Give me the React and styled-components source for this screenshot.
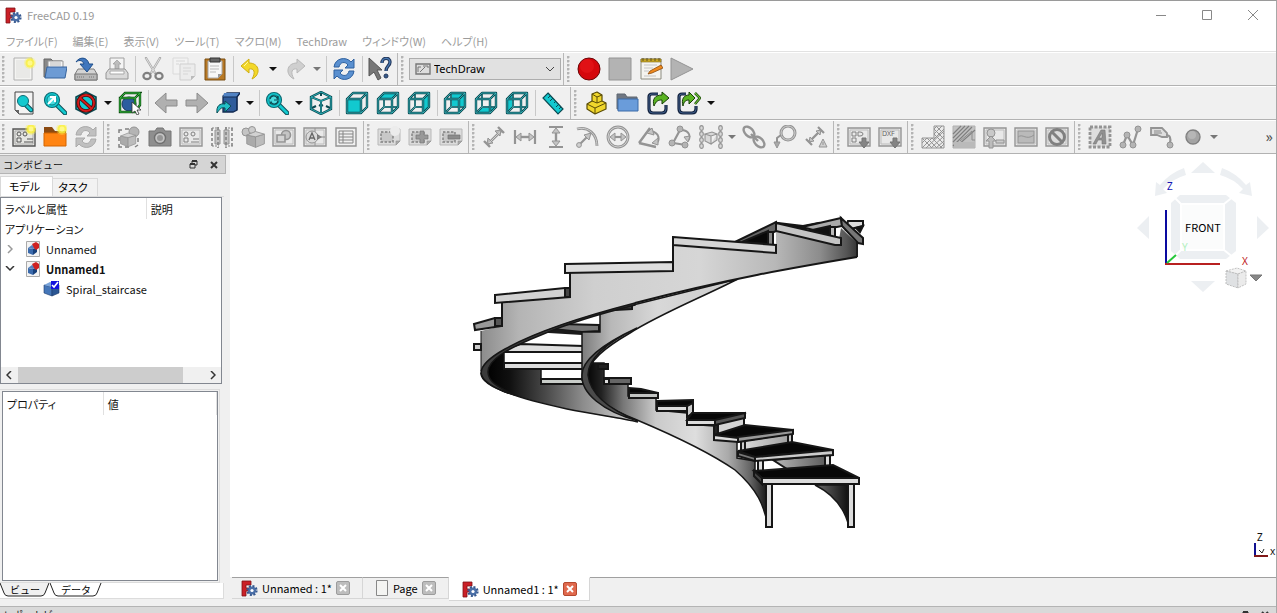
import React from "react";
import styled, { createGlobalStyle } from "styled-components";

const UI = `"Noto Sans CJK JP", "Noto Sans", sans-serif`;
const LATIN = `"Noto Sans", "Noto Sans CJK JP", sans-serif`;

const Global = createGlobalStyle`
  *, *::before, *::after { box-sizing: border-box; }
  body { margin: 0; background: #f0f0f0; overflow: hidden; }
  button, select { font: inherit; color: inherit; }
`;

/* ---------- window frame ---------- */

const Window = styled.div`
  display: flex;
  flex-direction: column;
  height: 100vh;
  border-top: 1px solid #9a9a9a;
  border-right: 1px solid #a8a8a8;
  font: 11px/16px ${UI};
  font-feature-settings: "palt";
  color: #111;
  background: #f0f0f0;
`;

const TitleBar = styled.header`
  display: flex;
  align-items: center;
  flex: none;
  height: 30px;
  padding: 0 0 2px 5px;
  background: #fff;
  color: #999;
`;

const Title = styled.h1`
  flex: 1;
  margin: 0 0 0 5px;
  font: 400 11px/16px ${UI};
`;

const CaptionButton = styled.button`
  display: grid;
  place-items: center;
  width: 46px;
  height: 28px;
  padding: 0;
  border: 0;
  background: none;
`;

const MenuBar = styled.nav`
  display: flex;
  gap: 15px;
  flex: none;
  height: 21px;
  padding: 1px 6px 0;
  background: #fff;
  border-bottom: 1px solid #e2e2e2;
`;

const MenuItem = styled.button`
  padding: 0;
  border: 0;
  background: none;
  color: #9c9c9c;
  line-height: 17px;
  white-space: nowrap;
`;

/* ---------- toolbars ---------- */

const ToolRow = styled.div`
  display: flex;
  flex: none;
  height: 34px;
  border-top: 1px solid #fff;
  border-bottom: 1px solid #b2b2b2;
  background: #f0f0f0;
`;

const Bar = styled.div`
  display: flex;
  align-items: center;
  flex: ${(p) => (p.$fill ? "1" : "none")};
  padding-right: 2px;
  border-right: 1px solid ${(p) => (p.$fill ? "transparent" : "#b8b8b8")};
`;

const Handle = styled.span`
  flex: none;
  width: ${(p) => (p.$first ? "8px" : "9px")};
  height: 26px;
  background: radial-gradient(circle at 1px 1px, #b4b4b4 1px, transparent 2px) 2px 0 / 3px 4px repeat-y;
  background-position-x: ${(p) => (p.$first ? "2px" : "3px")};
`;

const ToolButton = styled.button`
  display: grid;
  place-items: center;
  width: 31px;
  height: 30px;
  padding: 0;
  border: 0;
  background: none;
`;

const Drop = styled.button`
  display: grid;
  place-items: center;
  width: ${(p) => (p.$disabled ? "12px" : "13px")};
  height: 28px;
  padding: 0;
  border: 0;
  background: none;
`;

const Separator = styled.span`
  width: 5px;
  height: 26px;
  background: linear-gradient(#c8c8c8, #c8c8c8) 3px 0 / 1px 100% no-repeat;
`;

const More = styled.button`
  margin-left: auto;
  padding: 0;
  border: 0;
  background: none;
  font: 14px/16px ${LATIN};
  color: #555;
`;

const Workbench = styled.label`
  display: flex;
  align-items: center;
  width: 152px;
  height: 22px;
  margin: 0 0 0 2px;
  padding: 0 5px;
  border: 1px solid #adadad;
  background: #e1e1e1;
`;

const WorkbenchSelect = styled.select`
  flex: 1;
  min-width: 0;
  padding: 0 0 0 3px;
  border: 0;
  appearance: none;
  background: none;
  font: 11px/16px ${LATIN};
  color: #000;
`;

/* ---------- combo view dock ---------- */

const Workspace = styled.main`
  display: flex;
  flex: 1;
  min-height: 0;
`;

const Dock = styled.aside`
  display: flex;
  flex-direction: column;
  flex: none;
  width: 230px;
  padding: 1px 0 7px;
`;

const DockHeader = styled.div`
  display: flex;
  align-items: center;
  gap: 7px;
  flex: none;
  height: 19px;
  width: 226px;
  padding: 0 4px 0 3px;
  border: 1px solid #b4b4b4;
  border-left: 0;
  background: #d5d5d5;
`;

const DockTitle = styled.h2`
  flex: 1;
  margin: 0;
  font: 400 10px/16px ${UI};
`;

const IconButton = styled.button`
  display: grid;
  place-items: center;
  width: 14px;
  height: 14px;
  padding: 0;
  border: 0;
  background: none;
`;

const TabStrip = styled.div`
  display: flex;
  align-items: flex-end;
  flex: none;
  height: 23px;
  width: 224px;
  border-bottom: 1px solid #dcdcdc;
`;

const DockTab = styled.button`
  width: ${(p) => (p.$active ? "53px" : "45px")};
  height: ${(p) => (p.$active ? "20px" : "18px")};
  padding: 0 4px 2px 0;
  border: 1px solid #d9d9d9;
  border-width: 1px 1px 0 ${(p) => (p.$active ? "1px" : "0")};
  background: ${(p) => (p.$active ? "#fff" : "#f2f2f2")};
  color: #000;
`;

const TreeFrame = styled.section`
  display: flex;
  flex-direction: column;
  flex: 187 1 0;
  min-height: 0;
  width: 222px;
  border: 1px solid #828790;
  background: #fff;
`;

const TreeTable = styled.table`
  width: 100%;
  border-collapse: collapse;
  table-layout: fixed;
  th, td { height: 20px; padding: 0 4px; line-height: 16px; text-align: left; font-weight: 400; white-space: nowrap; }
  thead th + th { border-left: 1px solid #e0e0e0; }
  thead th { height: 21px; }
`;

const TreeCell = styled.div`
  display: flex;
  align-items: center;
  gap: 6px;
  height: 18px;
  padding-left: ${(p) => (p.$child ? "38px" : "0")};
  font: ${(p) => (p.$bold ? "700" : "400")} 11px/16px ${UI};
`;

const Expander = styled.button`
  display: grid;
  place-items: center;
  width: 12px;
  height: 14px;
  margin-right: 4px;
  margin-left: -1px;
  padding: 0;
  border: 0;
  background: none;
`;

const ScrollBar = styled.div`
  display: flex;
  justify-content: space-between;
  align-items: center;
  height: 16px;
  margin-top: auto;
  padding: 0 1px;
  background: #f0f0f0;
`;

const ScrollTrack = styled.div`
  flex: 1;
  height: 16px;
  padding-left: 2px;
`;

const ScrollThumb = styled.div`
  width: 88%;
  height: 16px;
  background: #cdcdcd;
`;

const PropertyPane = styled.section`
  display: flex;
  flex-direction: column;
  flex: 192 1 0;
  min-height: 0;
  width: 220px;
  margin-top: 5px;
  padding: 1px;
  border: 1px solid #dcdcdc;
  border-left-width: 0;
`;

const PropertyFrame = styled.div`
  flex: 1;
  margin-left: 1px;
  border: 1px solid #828790;
  background: #fff;
`;

const PropertyTable = styled.table`
  width: 100%;
  border-collapse: collapse;
  table-layout: fixed;
  th { height: 23px; padding: 0 4px; border-right: 1px solid #e0e0e0; text-align: left; font-weight: 400; }
`;

const BottomTabs = styled.div`
  display: flex;
  flex: none;
  height: 16px;
  width: 224px;
  border: 1px solid #dcdcdc;
  border-width: 0 1px 1px 0;
  background: #fff;
`;

const SlantTab = styled.button`
  display: block;
  position: relative;
  width: ${(p) => (p.$active ? "52px" : "50px")};
  height: 14px;
  padding: 0;
  border: 0;
  background: none;
  font: 10px/12px ${UI};
  color: #000;
  svg { position: absolute; inset: 0; z-index: 0; }
  span { position: relative; }
`;

/* ---------- document area ---------- */

const Documents = styled.section`
  display: flex;
  flex-direction: column;
  flex: 1;
  min-width: 0;
`;

const Viewport = styled.div`
  position: relative;
  flex: 1;
  min-height: 0;
  padding: 61px 0 0 240px;
  overflow: hidden;
  background: #fff;
  svg { display: block; }
`;

const NaviCube = styled.svg`
  position: absolute;
  top: 0;
  right: 0;
`;

const AxisCross = styled.svg`
  position: absolute;
  right: 0;
  bottom: 18px;
`;

const DocTabs = styled.div`
  display: flex;
  align-items: flex-start;
  flex: none;
  height: 29px;
  padding-left: 2px;
`;

const DocTab = styled.div`
  display: flex;
  align-items: center;
  gap: 4px;
  height: ${(p) => (p.$active ? "24px" : "22px")};
  padding: 0 12px 0 ${(p) => (p.$wide ? "13px" : "9px")};
  border: 1px solid #d6d6d6;
  border-left-width: 0;
  border-top-color: ${(p) => (p.$active ? "#fff" : "#a0a0a0")};
  background: ${(p) => (p.$active ? "#fff" : "#f0f0f0")};
`;

const DocTabLabel = styled.button`
  display: flex;
  align-items: center;
  gap: 4px;
  height: 18px;
  padding: 0;
  border: 0;
  background: none;
  font: 11px/16px ${UI};
  color: #000;
`;

const CloseTab = styled.button`
  display: grid;
  place-items: center;
  width: 14px;
  height: 14px;
  padding: 0;
  border: 1px solid ${(p) => (p.$active ? "#b5492f" : "#9c9c9c")};
  border-radius: 2px;
  background: ${(p) => (p.$active ? "#e0694d" : "#bdbdbd")};
`;

const TabFiller = styled.div`
  flex: 1;
  border-top: 1px solid #a0a0a0;
`;

const ReportHeader = styled.footer`
  display: flex;
  justify-content: space-between;
  flex: none;
  height: 7px;
  padding: 0 7px 0 3px;
  overflow: hidden;
  border-top: 1px solid #b4b4b4;
  background: #d9d9d9;
  font: 10px/16px ${UI};
`;

const ReportButtons = styled.div`
  display: flex;
  gap: 12px;
  padding-top: 4px;
`;

/* ---------- icon drawings ---------- */

const G = "#949494";
const L = "#d0d0d0";
const T = "#12c9cf";
const D = "#0b4a52";

const Svg = ({ size = 24, children }) => (
  <svg width={size} height={size} viewBox="0 0 24 24" fill="none" aria-hidden="true">{children}</svg>
);

const Glow = ({ x = 18, y = 6 }) => (
  <g>
    <circle cx={x} cy={y} r="6" fill="#fff64a" opacity=".35" />
    <circle cx={x} cy={y} r="4.5" fill="#fbf03a" opacity=".8" />
    <circle cx={x} cy={y} r="2.5" fill="#fff98a" />
  </g>
);

const CubeWire = ({ face }) => {
  const faces = {
    front: "M2 8h14v14H2z",
    top: "M2 8l6-6h14l-6 6z",
    right: "M16 8l6-6v14l-6 6z",
    rear: "M8 2h14v14H8z",
    bottom: "M2 22l6-6h14l-6 6z",
    left: "M2 8l6-6v14l-6 6z",
  };
  const hidden = "M8 2v14M8 16h14M8 16l-6 6";
  const outline = "M2 8h14v14H2zM2 8l6-6h14l-6 6M22 2v14l-6 6";
  const behind = ["rear", "bottom", "left"].includes(face);
  return (
    <>
      {behind && <path d={faces[face]} fill={T} />}
      {face !== "front" && <path d={hidden} stroke={D} strokeWidth="2" />}
      {face !== "front" && <path d={hidden} stroke="#6ccfd3" strokeWidth=".7" />}
      {!behind && <path d={faces[face]} fill={T} />}
      <path d={outline} stroke={D} strokeWidth="2.4" strokeLinejoin="round" />
      <path d={outline} stroke="#3fc0c5" strokeWidth=".8" strokeLinejoin="round" />
    </>
  );
};

const Lens = ({ children }) => (
  <>
    <path d="M14 14l8 8" stroke={D} strokeWidth="4.600" strokeLinecap="round" />
    <path d="M14 14l8 8" stroke={T} strokeWidth="2.800" strokeLinecap="round" />
    <circle cx="9" cy="9" r="7.500" fill={T} stroke="#0b6b74" strokeWidth="1.200" />
    <circle cx="9" cy="9" r="5" fill="#4adce0" stroke="#0b8088" />
    {children}
  </>
);

const Frame = ({ children }) => (
  <>
    <path d="M1 3h22v18H1z" fill="#e8e8e8" stroke={G} strokeWidth="1.400" />
    <path d="M3 5h18v14H3z" stroke="#bdbdbd" />
    {children}
  </>
);

const SheetFrame = ({ children }) => (
  <>
    <path d="M1 4h22v12l-4 4H1z" fill="#dcdcdc" stroke="#b8b8b8" />
    <path d="M23 16h-4v4z" fill="#aaa" stroke={G} strokeWidth=".6" />
    <path d="M4 7h12v10H4z" fill="#c8c8c8" stroke="#808080" strokeWidth="1.400" strokeDasharray="2.4 1.6" />
    {children}
  </>
);

const Dots = ({ pts }) => pts.map(([x, y]) => <circle key={`${x}-${y}`} cx={x} cy={y} r="3" fill="#b4b4b4" stroke={G} />);

const GrayCube = ({ x = 0, y = 0, s = 1 }) => (
  <g transform={`translate(${x} ${y}) scale(${s})`} stroke={G} strokeLinejoin="round">
    <path d="M2 8l10 2v12l-10-4z" fill="#aaa" />
    <path d="M12 10l10-3v11l-10 4z" fill="#bcbcbc" />
    <path d="M2 8l10-4 10 3-10 3z" fill="#d2d2d2" />
  </g>
);

const icons = {
  newDoc: (<><path d="M2 1h18v22H2z" fill="#f4f4f2" stroke="#b0b0b0" /><path d="M4 3h14v18H4z" fill="#e9e9e7" /><Glow /></>),
  open: (<><path d="M1 2h7l2 2h9v16H1z" fill="#888" stroke="#666" /><path d="M5 4h15v8H5z" fill="#f5f5f5" stroke="#999" /><path d="M7 6h11M7 8h11" stroke="#bbb" /><path d="M4 10h20l-2 11H2z" fill="#6d9bd4" stroke="#36639c" /></>),
  save: (<><path d="M4 12h16l3 5v6H1v-6z" fill="#d4d4d4" stroke="#7c7c7c" /><path d="M1 17h22v6H1z" fill="#b8b8b8" stroke="#777" /><path d="M3 20h8M15 20h6" stroke="#777" strokeDasharray="1 1" /><path d="M2 5C5 0 13-1 15 7h4l-6 8-7-8h4C9 4 6 2 2 5z" fill="#3f76bd" stroke="#20508c" /></>),
  print: (<><path d="M5 1h14v12H5z" fill="#f4f4f4" stroke="#a0a0a0" /><path d="M12 3l4 4h-2v5h-4V7H8z" fill="#bdbdbd" stroke="#999" strokeWidth=".7" /><path d="M4 12h16l3 4v6H1v-6z" fill="#dadada" stroke={G} /><path d="M5 14h14v3H5z" fill="#fff" stroke="#a8a8a8" /></>),
  cut: (<><path d="M5 1l9 15M19 1l-9 15" stroke="#aaa" strokeWidth="2.400" strokeLinecap="round" /><path d="M5 1l9 15M19 1l-9 15" stroke="#ddd" strokeWidth="1" /><ellipse cx="6" cy="19" rx="3.600" ry="3.200" stroke="#808080" strokeWidth="2.200" /><ellipse cx="18" cy="19" rx="3.600" ry="3.200" stroke="#808080" strokeWidth="2.200" /></>),
  copy: (<><path d="M1 1h15v16H1z" fill="#f2f2f2" stroke="#dadada" /><path d="M8 7h15v12l-4 4H8z" fill="#ececec" stroke="#cfcfcf" /><path d="M11 11h8M11 14h8M11 17h5M4 4h9M4 7h3" stroke="#d6d6d6" /><path d="M23 19h-4v4z" fill="#bbb" /></>),
  paste: (<><path d="M2 2h20v21H2z" fill="#b87925" stroke="#7b4e12" /><path d="M5 4h14v13l-4 4H5z" fill="#f7f7f7" stroke="#aaa" /><path d="M7 9h9M7 12h9M7 15h6" stroke="#bbb" /><path d="M19 17h-4v4z" fill="#999" /><path d="M7 1h10v4H7z" fill="#666" stroke="#333" /></>),
  undo: (<><path d="M10 2L2 9l8 7v-4c5-1 7 3 3 10 9-4 8-16-3-16z" fill="#f3d829" stroke="#cfae14" strokeLinejoin="round" /><path d="M9 5L5 9" stroke="#fff8a0" /></>),
  redo: (<path d="M14 2l8 7-8 7v-4c-5-1-7 3-3 10-9-4-8-16 3-16z" fill="#cfcfcf" stroke="#b8b8b8" strokeLinejoin="round" />),
  refresh: (<><path d="M2 10C3 1 14-1 19 5l3-3v9h-9l3-3C13 4 8 5 7 10z" fill="#5a90d0" stroke="#2f619f" /><path d="M22 14c-1 9-12 11-17 5l-3 3v-9h9l-3 3c3 4 8 3 9-2z" fill="#5a90d0" stroke="#2f619f" /></>),
  whats: (<><path d="M1 1l13 12H9l4 8-3 2-4-8-5 4z" fill="#777" stroke="#555" /><path d="M14 6c0-6 8-6 8-1 0 4-4 4-4 9" stroke="#24385c" strokeWidth="3.400" /><path d="M14 6c0-6 8-6 8-1 0 4-4 4-4 9" stroke="#4a7cb5" strokeWidth="1.200" /><circle cx="18" cy="19" r="2" fill="#35598a" stroke="#24385c" /></>),
  record: (<><circle cx="12" cy="12" r="11" fill="#d5070c" stroke="#6b0507" /><circle cx="10" cy="9" r="7" fill="#ec1b1e" opacity=".5" /></>),
  stop: (<path d="M1 1h22v22H1z" fill="#b3b3b3" stroke="#949494" />),
  edit: (<><path d="M2 2h20v20H2z" fill="#f5f4ef" stroke="#8c8c80" /><path d="M2 2h20v3H2z" fill="#c9a824" stroke="#806a18" strokeWidth=".6" /><path d="M4 1v3M8 1v3M12 1v3M16 1v3M20 1v3" stroke="#5e5020" /><path d="M5 8h13M5 11h9M5 14h5M5 19h12" stroke="#c4c4c4" /><path d="M22 8l2 3-11 5-4 1 2-3z" fill="#f08a1d" stroke="#8c4a0b" strokeWidth=".8" /></>),
  play: (<path d="M1 1l22 11L1 23z" fill="#b3b3b3" stroke="#949494" />),

  fitAll: (<><path d="M3 1h18v22H7l-4-4z" fill="#f3f3f3" stroke="#444" /><path d="M3 19h4v4z" fill="#666" /><path d="M14 14l5 5" stroke={D} strokeWidth="4.600" strokeLinecap="round" /><path d="M14 14l5 5" stroke={T} strokeWidth="2.800" strokeLinecap="round" /><circle cx="11" cy="10" r="5.500" fill={T} stroke="#0b6b74" /></>),
  fitSel: (<Lens><path d="M5 13l6-6M7 6h5v5" stroke="#fff" strokeWidth="2" /></Lens>),
  drawStyle: (<><path d="M12 1l10 5v12l-10 5-10-5V6z" fill={T} stroke={D} strokeWidth="1.600" /><circle cx="12" cy="12" r="8" stroke="#4a0a0a" strokeWidth="3.600" /><path d="M6 7l12 11" stroke="#4a0a0a" strokeWidth="3.600" /><circle cx="12" cy="12" r="8" stroke="#d41b1b" strokeWidth="1.800" /><path d="M6 7l12 11" stroke="#d41b1b" strokeWidth="1.800" /></>),
  boxSel: (<><circle cx="11" cy="13" r="7" fill="#2c5d9f" stroke="#173461" /><path d="M2 7h15v14H2zM2 7l5-5h15l-5 5M22 2v12l-5 7" stroke="#0d4d12" strokeWidth="2.400" /><path d="M2 7h15v14H2zM2 7l5-5h15l-5 5M22 2v12l-5 7" stroke="#37b83f" /><path d="M14 11l9 8h-4l2 4-2 1-2-4-3 2z" fill="#fff" stroke="#333" strokeWidth=".8" /></>),
  back: (<path d="M1 12L12 2v7h11v6H12v7z" fill="#b0b0b0" stroke="#8c8c8c" />),
  forward: (<path d="M23 12L12 2v7H1v6h11v7z" fill="#b0b0b0" stroke="#8c8c8c" />),
  link: (<><path d="M7 5l4-3h13l-3 4v13l-4 2H7z" fill="#2f5c9b" stroke="#122a52" strokeWidth="1.300" /><path d="M8 2h15l-3 4H7z" fill="#5183c4" /><path d="M7 6h14l3-4M21 6v13" stroke="#122a52" /><path d="M1 22c-1-7 3-10 8-9V10l6 5-6 6v-4c-4-1-5 1-8 5z" fill="#21bfc6" stroke={D} /></>),
  zoomSync: (<Lens><path d="M5 8c1-4 6-4 7-1l1-2v4H9M13 10c-1 4-6 4-7 1l-1 2" stroke={D} strokeWidth="1.200" /></Lens>),
  iso: (<><path d="M12 1l10 5v12l-10 5-10-5V6z" stroke={D} strokeWidth="2.400" /><path d="M2 6l10 4 10-4M12 10v13M12 2v3M3 17l4-2M21 17l-4-2M12 15l-2-1M12 15l2-1" stroke={D} strokeWidth="2" /><path d="M12 1l10 5v12l-10 5-10-5V6zM2 6l10 4 10-4M12 10v13" stroke="#2fb9bf" strokeWidth=".9" /></>),
  front: <CubeWire face="front" />, top: <CubeWire face="top" />, right: <CubeWire face="right" />,
  rear: <CubeWire face="rear" />, bottom: <CubeWire face="bottom" />, left: <CubeWire face="left" />,
  ruler: (<><path d="M7 2l15 16-5 5L2 7z" fill={T} stroke={D} strokeWidth="1.200" /><path d="M9 5L7 7M12 7l-3 3M15 10l-2 2M18 13l-3 3M20 16l-2 2" stroke={D} /></>),
  part: (<><path d="M8 3l5-2 5 3v6l4 2v6l-11 5-8-5v-5l5-3z" fill="#f0d62c" stroke="#5a4c06" strokeWidth="1.200" strokeLinejoin="round" /><path d="M3 13l8 4 11-5M11 17v6M8 3l5 3 5-2M13 6v6l5-2M8 10l5 2" stroke="#5a4c06" /></>),
  group: (<><path d="M2 3h8l2 3h10v12H2z" fill="#6e7682" stroke="#5f6670" /><path d="M3 8h20v12H3z" fill="#6a9cda" stroke="#3b6ba8" /></>),
  export1: (<><path d="M12 3H6Q3 3 3 6v12q0 4 4 4h9q4 0 4-4v-4" stroke="#14233f" strokeWidth="3.200" /><path d="M12 3H6Q3 3 3 6v12q0 4 4 4h9q4 0 4-4v-4" stroke="#41618f" strokeWidth=".9" /><path d="M8 15c-2-7 1-11 8-11V1l7 6-7 6V9c-4 0-6 1-8 6z" fill="#59b321" stroke="#173f07" /></>),
  export2: (<><path d="M9 3H5Q2 3 2 6v12q0 4 4 4h9q4 0 4-4v-3" stroke="#14233f" strokeWidth="3.200" /><path d="M9 3H5Q2 3 2 6v12q0 4 4 4h9q4 0 4-4v-3" stroke="#41618f" strokeWidth=".9" /><path d="M6 15c-2-7 1-11 6-11V1l6 6-6 6V9c-3 0-5 1-6 6z" fill="#59b321" stroke="#173f07" /><path d="M18 2l5 5-5 6" stroke="#173f07" strokeWidth="2.600" /><path d="M18 2l5 5-5 6" stroke="#72c93d" strokeWidth="1.100" /></>),

  page: (<><path d="M1 4h22v17H1z" fill="#e6e6e2" stroke="#555" strokeWidth="1.400" /><path d="M3 6h18v13H3z" stroke="#aaa" /><circle cx="7" cy="9" r="2" stroke="#555" /><circle cx="13" cy="9" r="2" stroke="#555" /><path d="M5 13h4v4H5zM12 17h9M15 14h6" stroke="#555" /><Glow x={19} y={4} /></>),
  pageTpl: (<><path d="M1 2h8l3 4h11v15H1z" fill="#8b4a12" /><path d="M1 8h22v13H1z" fill="#ff8412" stroke="#d36500" /><Glow x={19} y={4} /></>),
  redraw: (<><path d="M2 10C3 1 14-1 19 5l3-3v9h-9l3-3C13 4 8 5 7 10z" fill="#c0c0c0" stroke="#aaa" /><path d="M22 14c-1 9-12 11-17 5l-3 3v-9h9l-3 3c3 4 8 3 9-2z" fill="#c0c0c0" stroke="#aaa" /></>),
  view: (<><circle cx="17" cy="7" r="5" fill="#b4b4b4" stroke={G} /><path d="M2 8V5h3M8 4h4M2 12v4M2 19v3h3M8 22h4M21 13v4M21 20l-3 2" stroke="#808080" strokeWidth="1.500" /><GrayCube x={2} y={5} s={0.76} /></>),
  camera: (<><path d="M1 6h6l2-3h6l2 3h6v15H1z" fill="#8f8f8f" stroke="#767676" strokeLinejoin="round" /><circle cx="12" cy="13" r="5.500" fill="#c4c4c4" stroke="#707070" strokeWidth="1.400" /><circle cx="12" cy="13" r="3" fill="#969696" /></>),
  sheet: (<Frame><circle cx="7" cy="9" r="2" stroke="#808080" /><circle cx="14" cy="9" r="2" stroke="#808080" /><path d="M5 13h4v4H5zM12 17h8M14 14h6" stroke="#808080" /></Frame>),
  projGroup: (<><path d="M5 5h5v14H5zM14 5h5v14h-5z" fill="#c4c4c4" stroke={G} /><path d="M2 3v19M22 3v19M8 2v21M16 2v21" stroke="#858585" strokeWidth="1.600" strokeDasharray="3 2" /><path d="M2 3h7M15 3h8M2 21h7M15 21h8" stroke="#858585" strokeDasharray="2 1" /></>),
  views: (<><circle cx="5" cy="7" r="4" fill="#c4c4c4" stroke={G} /><circle cx="11" cy="5" r="3.500" fill="#ccc" stroke={G} /><GrayCube x={4} y={3} s={0.88} /></>),
  section: (<Frame><circle cx="14" cy="10" r="4.500" fill="#c4c4c4" stroke={G} strokeWidth="1.600" /><path d="M5 10h8v7H5z" fill="#d4d4d4" stroke={G} strokeWidth="1.600" /></Frame>),
  detail: (<Frame><path d="M12 3v18" stroke={G} /><circle cx="9" cy="12" r="6" fill="#dadada" stroke={G} /><path d="M6 15l3-7 3 7M7 13h4" stroke="#666" strokeWidth="1.300" /><path d="M14 9l5 3-5 3z" fill="#777" /><path d="M14 12h8" stroke="#888" /></Frame>),
  spreadsheet: (<><path d="M2 3h20v18H2z" fill="#f0f0f0" stroke={G} strokeWidth="1.400" /><path d="M5 6h14v12H5zM5 9h14M5 12h14M5 15h14M9 6v12" stroke="#858585" /></>),
  clip: <SheetFrame><circle cx="18" cy="6" r="5" fill="#ececec" /></SheetFrame>,
  clipAdd: <SheetFrame><path d="M12 6h4v4h4v4h-4v4h-4v-4H8v-4h4z" fill="#999" stroke="#777" strokeWidth=".7" /></SheetFrame>,
  clipSub: <SheetFrame><path d="M9 10h12v4H9z" fill="#8c8c8c" stroke="#707070" strokeWidth=".7" /></SheetFrame>,
  length: (<g stroke={G}><path d="M2 16l6 6M16 2l6 6" strokeWidth="2.400" /><path d="M6 19L19 6" strokeWidth="2.600" /><path d="M5 19l1-6 5 5zM19 5l-1 6-5-5z" fill="#bbb" /><path d="M7 18L18 7" stroke={L} /></g>),
  horiz: (<g stroke={G}><path d="M2 5v14M22 5v14" strokeWidth="2.200" /><path d="M5 12h14" strokeWidth="2.400" /><path d="M3 12l5-4v8zM21 12l-5-4v8z" fill="#c4c4c4" /></g>),
  vert: (<g stroke={G}><path d="M5 2h14M5 22h14" strokeWidth="2.200" /><path d="M12 5v14" strokeWidth="2.400" /><path d="M12 3L8 8h8zM12 21l-4-5h8z" fill="#c4c4c4" /></g>),
  radius: (<g stroke={G}><path d="M2 4c11-3 20 5 20 17" strokeWidth="2.800" /><path d="M2 4c11-3 20 5 20 17" stroke={L} /><path d="M4 20l8-8" strokeWidth="2.200" /><path d="M16 8l-2 7-5-5z" fill="#c4c4c4" /><circle cx="4" cy="20" r="2.400" fill="#d0d0d0" /></g>),
  diameter: (<g stroke={G}><circle cx="12" cy="12" r="10" strokeWidth="2.800" /><circle cx="12" cy="12" r="10" stroke="#d0d0d0" strokeWidth="1" /><path d="M6 12h12" strokeWidth="2.200" /><path d="M4 12l5-4v8zM20 12l-5-4v8z" fill="#c4c4c4" /></g>),
  angle: (<g stroke={G} strokeWidth="2"><path d="M2 18L13 3M2 18l17 4" strokeWidth="2.400" /><path d="M14 6c9 2 9 9 5 13" /><path d="M21 13l-6 5 6 2zM15 3l-5 5 7 2z" fill="#c4c4c4" strokeWidth="1" /></g>),
  angle3: (<g stroke={G}><path d="M5 18l7-13M5 18l13 2" strokeWidth="2.200" /><path d="M14 5c8 1 9 7 6 11" strokeWidth="1.800" /><Dots pts={[[4, 18], [12, 4], [17, 20]]} /><path d="M16 12l6-1-2 6z" fill="#c4c4c4" /></g>),
  link3d: (<g stroke={G} strokeWidth="1.100" fill="#d8d8d8">{[3, 9, 15, 21].map((y) => <g key={y}><ellipse cx="2.500" cy={y} rx="1.800" ry="2.400" /><ellipse cx="21.500" cy={y} rx="1.800" ry="2.400" /></g>)}<path d="M6 9l7-2 5 2-6 2zM6 9v7l6 3v-8M12 19l6-4V9" /></g>),
  chain: (<g stroke={G}><ellipse cx="7" cy="7" rx="6.500" ry="4" transform="rotate(45 7 7)" strokeWidth="2.400" /><ellipse cx="17" cy="17" rx="6.500" ry="4" transform="rotate(45 17 17)" strokeWidth="2.400" /><path d="M9 9l7 7" strokeWidth="2.400" /></g>),
  balloon: (<g stroke={G}><circle cx="15" cy="8" r="7" strokeWidth="3" /><circle cx="15" cy="8" r="7" stroke="#d0d0d0" strokeWidth="1" /><path d="M8 10L4 13v7" strokeWidth="2" /><path d="M1 17h6l-3 6z" fill="#aaa" /></g>),
  extent: (<g stroke={G}><path d="M2 14l6 6M14 2l6 6" strokeWidth="2.200" /><path d="M5 17L17 5" strokeWidth="2.400" /><path d="M5 17l1-5 4 4zM17 5l-1 5-4-4z" fill="#c4c4c4" /><path d="M19 14l4 8h-8z" fill="#d0d0d0" /><path d="M19 17v3" /></g>),
  svgOut: (<Frame><path d="M5 7h4v4H5zM5 13h4v4H5z" stroke="#808080" /><path d="M11 7h2q3 0 3 2t-3 2h-2z" stroke="#808080" /><path d="M15 13h4v4h3l-5 6-5-6h3z" fill="#858585" stroke="#747474" /></Frame>),
  dxfOut: (<Frame><text x="4" y="11" fontSize="7" fontFamily="Noto Sans" fill="#666">DXF</text><path d="M15 13h4v4h3l-5 6-5-6h3z" fill="#858585" stroke="#747474" /></Frame>),
  hatch: (<><path d="M13 1h10v22H1V13h12z" fill="#eaeaea" stroke={G} /><path d="M13 4l3-3M13 9l8-8M13 14L23 4M1 18l5-5M1 23l10-10M5 23L23 6M10 23l13-12M15 23l8-7M19 23l4-4M1 13l10 10M6 13l10 10M11 13l10 10M13 9l10 10M13 4l10 10M15 1l8 8" stroke={G} /></>),
  geomHatch: (<><path d="M1 1h22v22H1z" fill="#c2c2c2" stroke="#b0b0b0" /><path d="M1 9l8-8M1 13L13 1M1 17L17 1M1 21L20 2M5 21L23 5" stroke="#808080" strokeWidth="1.200" /><path d="M8 16L20 6v9h3M2 19h21" stroke="#8c8c8c" /><path d="M2 17h21v5H2z" fill="#bababa" /></>),
  symbol: (<Frame><path d="M13 15h8v3h-8z" fill="#ccc" stroke={G} /><circle cx="8" cy="8" r="4" fill="#c8c8c8" stroke={G} /><path d="M8 11l5 5h-3v7H6v-7H3z" fill="#bcbcbc" stroke={G} /></Frame>),
  image: (<Frame><path d="M4 6h16v12H4z" fill="#bababa" stroke={G} /><path d="M4 12c5-4 8 4 16-2" stroke="#949494" /></Frame>),
  toggle: (<Frame><circle cx="12" cy="12" r="7.500" fill="#dcdcdc" stroke="#808080" strokeWidth="3" /><path d="M7 7l10 10" stroke="#808080" strokeWidth="3" /></Frame>),
  anno: (<><path d="M2 2h20v20H2z" fill="#dedede" stroke={G} strokeWidth="2.800" strokeDasharray="3 1.500" /><path d="M5 19l8-14h4l1 14h-4v-4h-4l-2 4zM11 13h3V8z" fill="#909090" stroke="#777" strokeWidth=".6" /></>),
  leader: (<><path d="M4 20l4-10 6 10 5-16" stroke={G} strokeWidth="2.200" /><Dots pts={[[4, 20], [8, 10], [14, 20], [19, 4]]} /></>),
  rich: (<><path d="M1 3h11l5 5v4h-5L7 10H1z" fill="#dedede" stroke={G} strokeWidth="1.800" /><path d="M4 6h7M4 8h8" stroke="#888" /><path d="M16 10c4 0 5 3 4 8" stroke={G} strokeWidth="2.200" /><Dots pts={[[20, 20]]} /></>),
  cosmetic: (<><circle cx="12" cy="12" r="7" fill="#a4a4a4" stroke="#808080" strokeWidth="1.400" /><circle cx="11" cy="10" r="4" fill="#b6b6b6" /></>),
};

const Triangle = ({ disabled }) => (
  <svg width="8" height="4" aria-hidden="true"><path d="M0 0h8L4 4z" fill={disabled ? "#777" : "#111"} /></svg>
);

const rows = [
  [
    ["newDoc", "open", "save", "print", "|", "cut", "copy", "paste", "|", "undo", "v", "redo", "v", "|", "refresh", "|", "whats"],
    ["select"],
    ["record", "stop", "edit", "play"],
  ],
  [
    ["fitAll", "fitSel", "drawStyle", "v", "boxSel", "|", "back", "forward", "link", "v", "|", "zoomSync", "v", "iso", "|", "front", "top", "right", "|", "rear", "bottom", "left", "|", "ruler"],
    ["part", "group", "export1", "export2", "v"],
  ],
  [
    ["page", "pageTpl", "redraw"],
    ["view", "camera", "sheet", "projGroup", "views", "section", "detail", "spreadsheet"],
    ["clip", "clipAdd", "clipSub"],
    ["length", "horiz", "vert", "radius", "diameter", "angle", "angle3", "link3d", "d", "chain", "balloon", "extent"],
    ["svgOut", "dxfOut"],
    ["hatch", "geomHatch", "symbol", "image", "toggle"],
    ["anno", "leader", "rich", "cosmetic", "d", "more"],
  ],
];

function Tool({ name, after }) {
  if (name === "|") return <Separator />;
  if (name === "v" || name === "d")
    return <Drop $disabled={name === "d"} aria-label="more options"><Triangle disabled={name === "d" || after === "redo"} /></Drop>;
  if (name === "more") return <More aria-label="more tools">»</More>;
  if (name === "select")
    return (
      <Workbench>
        <svg width="16" height="12" viewBox="0 0 16 12" aria-hidden="true">
          <path d="M1 1h14v10H1z" fill="#ddd" stroke="#777" strokeWidth="1.400" />
          <path d="M3 9V4h3M5 9l5-5M8 3h5v2" stroke="#777" fill="none" />
        </svg>
        <WorkbenchSelect aria-label="workbench" defaultValue="TechDraw">
          <option>TechDraw</option>
        </WorkbenchSelect>
        <svg width="9" height="5" aria-hidden="true"><path d="M0 0l4 4 4-4" stroke="#444" fill="none" /></svg>
      </Workbench>
    );
  return <ToolButton aria-label={name}><Svg>{icons[name]}</Svg></ToolButton>;
}

const AppLogo = () => (
  <svg width="17" height="17" viewBox="0 0 17 17" aria-hidden="true">
    <path d="M1 1h9v4H5v3h4v3H5v5H1z" fill="#cb2027" stroke="#7d1216" strokeWidth=".8" />
    <circle cx="11" cy="10.500" r="4" fill="#4a6fa8" />
    <circle cx="11" cy="10.500" r="4.600" fill="none" stroke="#36588f" strokeWidth="2" strokeDasharray="2 1.600" />
    <circle cx="11" cy="10.500" r="1.600" fill="#fff" />
  </svg>
);

const DocIcon = () => (
  <svg width="14" height="16" viewBox="0 0 14 16" aria-hidden="true">
    <path d="M.5.5h13v15H.5z" fill="#f3f3f3" stroke="#aaa" />
    <path d="M2 7l5 1v6l-5-2z" fill="#3a6aac" /><path d="M7 8l4-2v5l-4 3z" fill="#18417c" /><path d="M2 7l4-3 5 2-4 2z" fill="#5583bf" />
    <path d="M6 3l4-2 3 2v4l-3 2-2-2z" fill="#cf2222" />
  </svg>
);

const PartIcon = () => (
  <svg width="17" height="16" viewBox="0 0 17 16" aria-hidden="true">
    <path d="M1 4l8 2v9l-8-3z" fill="#4577b9" stroke="#1c3b6b" strokeWidth=".6" /><path d="M9 6l7-2v8l-7 3z" fill="#2b5693" stroke="#1c3b6b" strokeWidth=".6" /><path d="M1 4l6-3 9 3-7 2z" fill="#7aa4da" />
    <path d="M8 0h8v8H8z" fill="#1212dd" /><path d="M9 4l2 2 4-5" stroke="#fff" strokeWidth="1.600" fill="none" />
  </svg>
);

/* ---------- 3D scene ---------- */

const Gradient = ({ id, x1, x2, stops }) => (
  <linearGradient id={id} gradientUnits="userSpaceOnUse" x1={x1} x2={x2} y1="0" y2="0">
    {stops.map(([o, c]) => <stop key={o} offset={o} stopColor={c} />)}
  </linearGradient>
);

const Staircase = () => (
  <svg width="400" height="320" viewBox="470 215 400 320" role="img" aria-label="Spiral_staircase">
    <defs>
      <Gradient id="outer" x1="481" x2="858" stops={[[0, "#8c8c8c"], [0.1, "#b4b4b4"], [0.3, "#cfcfcf"], [0.58, "#d6d6d6"], [0.78, "#b8b8b8"], [0.9, "#8c8c8c"], [0.97, "#555"], [1, "#333"]]} />
      <Gradient id="inside" x1="486" x2="635" stops={[[0, "#000"], [0.16, "#101010"], [0.4, "#494949"], [0.65, "#8c8c8c"], [1, "#d4d4d4"]]} />
      <Gradient id="innerTop" x1="580" x2="735" stops={[[0, "#777"], [0.2, "#b8b8b8"], [0.5, "#d8d8d8"], [1, "#ccc"]]} />
      <Gradient id="lower" x1="587" x2="768" stops={[[0, "#050505"], [0.08, "#222"], [0.2, "#777"], [0.38, "#cacaca"], [0.6, "#dedede"], [0.78, "#aaa"], [0.9, "#666"], [1, "#111"]]} />
      <Gradient id="foot" x1="812" x2="850" stops={[[0, "#777"], [1, "#0b0b0b"]]} />
      <Gradient id="gap" x1="742" x2="830" stops={[[0, "#ddd"], [0.45, "#aaa"], [1, "#555"]]} />
    </defs>
    <g stroke="#161616" strokeWidth="2" strokeLinejoin="miter">
      {/* rear flight seen through the opening */}
      <path fill="#dedede" d="M504 351l7-4 10-3 62 2v6h-79z" />
      <path fill="#777" d="M542 328l18-4 39 1v6l-17 1z" />
      <path stroke="none" fill="#1a1a1a" d="M540 327l42 5v3l-50-3z" />
      <path fill="url(#inside)" stroke="none" d="M504 352v17h37v15h50l8 18 38 20c-50-9-88-15-134-30-16-8-18-18-15-26 4-8 10-11 16-14z" />
      <path fill="none" strokeWidth="1.500" d="M504 352v17h37v15h40" />
      <path fill="#dedede" d="M504 363h79v6h-79z" />
      <path fill="#c9cdc9" d="M541 379h42v5h-42z" />
      {/* inner stringer, upper half */}
      <path fill="url(#innerTop)" strokeWidth="1.500" d="M582 332h18v-20l33-7 105-26c-40 20-80 36-108 54-24 14-43 28-43 45l-5 2z" />
      <path fill="#3c3c3c" d="M600 310l32-6v5l-35 2z" />
      {/* inner stringer, lower half */}
      <path fill="url(#lower)" strokeWidth="1.500" d="M593 363h11v20h24v13h28v14l31 3v11l27 2v12l23 3v17l18 3v12l9 10h4v43c-4-20-10-36-33-56-26-18-60-34-98-50-27-11-44-22-50-37-1-8 1-16 6-21z" />
      <path fill="#4a4a4a" strokeWidth="1.500" d="M637 328c-30 14-55 30-55 47-1 18 20 36 56 46-30-12-48-28-50-46 0-16 18-32 49-47z" />
      <path fill="#222" d="M598 364h10v5h-10z" />
      {/* outer stringer, upper half */}
      <path fill="url(#outer)" stroke="none" d="M481 331l21-5v-24l68-4v-25l103-2v-25l103 7v-24l62 16 3-17 17 16v13c-60 10-130 22-222 46-54 14-100 30-132 49-16 9-22 16-23 24z" />
      <path fill="none" d="M502 326v-24M570 298v-26M673 271v-25" />
      <path fill="none" strokeWidth="1" d="M481 331v40" />
      <path fill="none" d="M857 257c-60 10-130 22-222 46" />
      <path fill="none" strokeWidth="1.500" d="M857 240v17" />
      <path fill="#3b3b3b" strokeWidth="1.500" d="M635 303c-54 14-98 28-130 46-18 10-24 17-24 24 0 8 10 15 34 22-18-8-27-14-27-23 0-12 18-23 53-37 28-12 58-21 94-30z" />
      <path fill="none" strokeWidth="1.500" d="M481 373c2 15 40 26 86 36 30 6 56 9 71 13" />
      {/* upper treads */}
      <path fill="#999" d="M474 324l21-6h7v8l-27 4z" /><path fill="#555" d="M495 318h7v8h-7z" />
      <path fill="#ccc" d="M474 344h7v6h-7z" />
      <path fill="#d2d2d2" d="M495 295l70-7h5v9l-75 6z" /><path fill="#444" d="M565 288h5v9h-5z" />
      <path fill="#ddd" d="M565 264l108-2v9l-108 2z" />
      <path fill="#ddd" d="M848 221h15v5l-17 4z" />
      <path fill="#111" d="M778 223l25 3 15-3-2 5-30 1z" />
      <path fill="#aaa" d="M802 227l39-9 1 8-25 5z" />
      <path fill="#111" d="M808 231l22-5v12z" /><path fill="#bbb" d="M830 227h5v11h-5z" />
      <path fill="#666" d="M735 242l41-20v9l-26 12z" />
      <path fill="#080808" d="M742 242l26-11v13z" /><path fill="#888" d="M768 232h5v14h-5z" />
      <path fill="#c4c4c4" d="M776 223l65 15v7h-6l-59-14z" />
      <path fill="#777" d="M841 218l22 20v6l-5-1-16-17z" />
      <path fill="#111" d="M856 228l7-2-3 6z" />
      <path fill="#d5d5d5" d="M673 237l103 8v8l-103-8z" />
      {/* lower treads */}
      <path fill="#666" d="M604 378h27v6h-27z" /><path fill="#ddd" d="M604 379h5v5h-5z" />
      <path fill="#070707" d="M629 388l12 1 17 4h-29z" /><path fill="#c2c4c2" d="M629 393h29v5h-29z" />
      <path fill="#ccc" d="M687 406l6-4v11l-6 4z" />
      <path fill="#070707" d="M657 401l36-1v3l-6 3h-30z" /><path fill="#ddd" d="M657 406h30v5h-30z" />
      <path fill="#d4d4d4" d="M717 424l27-8v12l-27 8z" /><path fill="#222" d="M714 425h4v10h-4z" />
      <path fill="#070707" d="M687 420l5-7h54l-31 8z" /><path fill="#ddd" d="M687 420h28v5h-28z" /><path fill="#555" d="M715 420l30-7v5l-30 7z" />
      <path fill="url(#gap)" d="M742 441l46-7v10l-46 8z" /><path fill="#ccc" d="M741 441h4v11h-4zM788 433h4v10h-4z" />
      <path fill="#070707" d="M714 435l31-10 48 5-55 8z" /><path fill="#ddd" d="M714 435l24 3v4l-24-2z" /><path fill="#999" d="M738 437l55-7v4l-55 8z" />
      <path fill="url(#gap)" d="M773 460l53-5v12l-39 2z" /><path fill="#ddd" d="M758 460h5v13h-5zM825 454h5v12h-5z" />
      <path fill="#070707" d="M738 451l54-9 41 8-78 7z" /><path fill="#777" d="M738 452l17 5v4l-17-5z" /><path fill="#ccc" d="M755 457l78-7v5l-78 6z" />
      <path fill="url(#foot)" strokeWidth="1.500" d="M815 485h34v42c-4-18-14-32-34-42z" />
      <path fill="#dcdcdc" d="M766 484h6v43h-6zM848 484h6v43h-6z" />
      <path fill="#070707" d="M754 471l79-6 26 13h-97z" /><path fill="#444" d="M754 471l8 7v6l-8-8z" /><path fill="#dcdcdc" d="M762 478h97v6h-97z" />
    </g>
  </svg>
);

const menus = ["ファイル(F)", "編集(E)", "表示(V)", "ツール(T)", "マクロ(M)", "TechDraw", "ウィンドウ(W)", "ヘルプ(H)"];

const SlantShape = ({ w, fill }) => (
  <svg width={w} height="14" aria-hidden="true">
    <path d={`M0 0l4 10q1 3 4 3h${w - 17}q3 0 4-3l4-10`} fill={fill} stroke="#222" />
  </svg>
);

const Cross = ({ size = 8, color = "#333", width = 2 }) => (
  <svg width={size} height={size} viewBox="0 0 8 8" aria-hidden="true"><path d="M1 1l6 6M7 1L1 7" stroke={color} strokeWidth={width} /></svg>
);

const FloatIcon = () => (
  <svg width="9" height="9" aria-hidden="true"><path d="M3 3V1h5v4H6M1 4h5v4H1z" fill="none" stroke="#333" strokeWidth="1" /><path d="M3 1h5M1 4h5" stroke="#333" strokeWidth="2" /></svg>
);

export default function App() {
  return (
    <Window>
      <Global />
      <TitleBar>
        <AppLogo />
        <Title>FreeCAD 0.19</Title>
        <CaptionButton aria-label="minimize"><svg width="11" height="11"><path d="M0 5.500h10" stroke="#888" /></svg></CaptionButton>
        <CaptionButton aria-label="maximize"><svg width="11" height="11"><path d="M.5.5h9v9h-9z" stroke="#888" fill="none" /></svg></CaptionButton>
        <CaptionButton aria-label="close"><svg width="11" height="11"><path d="M0 0l10 10M10 0L0 10" stroke="#888" /></svg></CaptionButton>
      </TitleBar>
      <MenuBar>{menus.map((m) => <MenuItem key={m}>{m}</MenuItem>)}</MenuBar>

      {rows.map((bars, r) => (
        <ToolRow key={r}>
          {bars.map((tools, b) => (
            <Bar key={b} $fill={b === bars.length - 1} role="toolbar">
              <Handle $first={b === 0} />
              {tools.map((t, i) => <Tool key={i} name={t} after={tools[i - 1]} />)}
            </Bar>
          ))}
        </ToolRow>
      ))}

      <Workspace>
        <Dock>
          <DockHeader>
            <DockTitle>コンボビュー</DockTitle>
            <IconButton aria-label="float"><FloatIcon /></IconButton>
            <IconButton aria-label="close"><Cross /></IconButton>
          </DockHeader>
          <TabStrip role="tablist">
            <DockTab $active role="tab">モデル</DockTab>
            <DockTab role="tab">タスク</DockTab>
          </TabStrip>
          <TreeFrame>
            <TreeTable>
              <colgroup><col style={{ width: "66%" }} /><col /></colgroup>
              <thead><tr><th>ラベルと属性</th><th>説明</th></tr></thead>
              <tbody>
                <tr><td colSpan="2">アプリケーション</td></tr>
                <tr><td colSpan="2"><TreeCell>
                  <Expander aria-label="expand"><svg width="6" height="9"><path d="M1 0l4 4-4 4" stroke="#999" strokeWidth="1.500" fill="none" /></svg></Expander>
                  <DocIcon />Unnamed</TreeCell></td></tr>
                <tr><td colSpan="2"><TreeCell $bold>
                  <Expander aria-label="collapse"><svg width="10" height="6"><path d="M1 0l4 4 4-4" stroke="#333" strokeWidth="1.500" fill="none" /></svg></Expander>
                  <DocIcon />Unnamed1</TreeCell></td></tr>
                <tr><td colSpan="2"><TreeCell $child><PartIcon />Spiral_staircase</TreeCell></td></tr>
              </tbody>
            </TreeTable>
            <ScrollBar>
              <IconButton aria-label="scroll left"><svg width="6" height="9"><path d="M5 0L1 4l4 4" stroke="#333" strokeWidth="1.500" fill="none" /></svg></IconButton>
              <ScrollTrack><ScrollThumb /></ScrollTrack>
              <IconButton aria-label="scroll right"><svg width="6" height="9"><path d="M1 0l4 4-4 4" stroke="#333" strokeWidth="1.500" fill="none" /></svg></IconButton>
            </ScrollBar>
          </TreeFrame>
          <PropertyPane>
            <PropertyFrame>
              <PropertyTable>
                <colgroup><col style={{ width: "47%" }} /><col /></colgroup>
                <thead><tr><th>プロパティ</th><th>値</th></tr></thead>
              </PropertyTable>
            </PropertyFrame>
          </PropertyPane>
          <BottomTabs>
            <SlantTab><SlantShape w={50} fill="#f0f0f0" /><span>ビュー</span></SlantTab>
            <SlantTab $active><SlantShape w={52} fill="#fff" /><span>データ</span></SlantTab>
          </BottomTabs>
        </Dock>

        <Documents>
          <Viewport>
            <Staircase />
            <NaviCube width="150" height="150" viewBox="1126 154 150 150">
              <g fill="#eceff2">
                <path d="M1191 173l12-11 12 11zM1191 281h24l-12 11zM1149 216v23l-12-11zM1257 216v23l12-11z" />
                <path d="M1184 168l2 7q-14 4-23 14l4 4-12 3 1-14 4 3q10-12 24-17zM1222 168l-2 7q14 4 23 14l-4 4 13 3-2-14-4 3q-10-12-24-17z" />
                <path d="M1180 195h46l10 8v48l-10 8h-46l-9-8v-48z" />
              </g>
              <path d="M1181 204h43v46h-43z" fill="#fbfcfc" stroke="#fff" strokeWidth="2" />
              <path d="M1173 196l8 8M1234 196l-10 8M1234 258l-10-8M1173 258l8-8" stroke="#fff" strokeWidth="2" />
              <text x="1203" y="232" textAnchor="middle" fontSize="11" fontFamily="'Noto Sans CJK JP'" fill="#000">FRONT</text>
              <path d="M1166 210v54" stroke="#0a0aa0" strokeWidth="2" />
              <path d="M1165 264h55" stroke="#b82020" strokeWidth="2" />
              <path d="M1167 263l9-8" stroke="#25c83a" strokeWidth="2" />
              <g fontFamily="'Noto Sans'" fontSize="10">
                <text x="1167" y="190" fill="#1515b5">Z</text>
                <text x="1242" y="265" fill="#c02020">X</text>
                <text x="1182" y="251" fill="#b4f0c0">Y</text>
              </g>
              <g stroke="#b4b4b4" strokeWidth=".8" strokeDasharray="2 1">
                <path d="M1226 271l11-3 9 3-8 3z" fill="#f2f2f2" /><path d="M1226 271l12 3v14l-12-4z" fill="#dfe1e3" /><path d="M1238 274l8-3v13l-8 4z" fill="#ebebeb" />
              </g>
              <path d="M1250 275h12l-6 6z" fill="#888" stroke="#777" />
            </NaviCube>
            <AxisCross width="24" height="28" viewBox="0 0 24 28">
              <path d="M3 12v14" stroke="#111190" strokeWidth="2" /><path d="M2 25h14" stroke="#801818" strokeWidth="2" />
              <path d="M7 19l3 3 2-4" stroke="#222" fill="none" />
              <g fontFamily="'Noto Sans'" fontSize="10" fill="#111"><text x="5" y="10">Z</text><text x="18" y="24">x</text></g>
            </AxisCross>
          </Viewport>
          <DocTabs role="tablist">
            <DocTab><DocTabLabel role="tab"><AppLogo />Unnamed : 1*</DocTabLabel><CloseTab aria-label="close"><Cross color="#fff" /></CloseTab></DocTab>
            <DocTab $wide><DocTabLabel role="tab">
              <svg width="13" height="16" aria-hidden="true"><path d="M.5.5h11v15H.5z" fill="#f4f4f2" stroke="#888" /></svg>Page</DocTabLabel>
              <CloseTab aria-label="close"><Cross color="#fff" /></CloseTab></DocTab>
            <DocTab $active $wide><DocTabLabel role="tab"><AppLogo />Unnamed1 : 1*</DocTabLabel><CloseTab $active aria-label="close"><Cross color="#fff" /></CloseTab></DocTab>
            <TabFiller />
          </DocTabs>
        </Documents>
      </Workspace>
      <ReportHeader>
        <span>レポートビュー</span>
        <ReportButtons><FloatIcon /><Cross /></ReportButtons>
      </ReportHeader>
    </Window>
  );
}
